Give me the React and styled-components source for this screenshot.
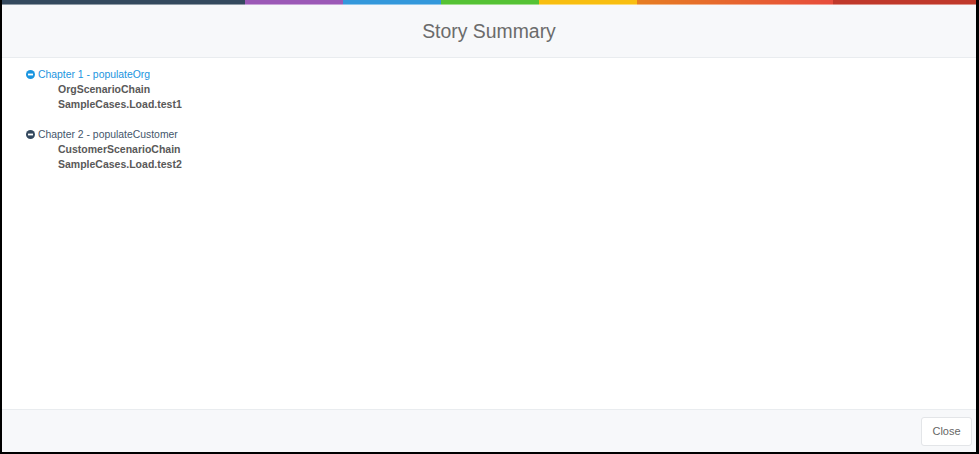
import styled, { createGlobalStyle } from "styled-components";

const GlobalStyle = createGlobalStyle`
    html, body {
        margin: 0;
        padding: 0;
        background: #000;
    }
    body {
        font-family: "Liberation Sans", Arial, sans-serif;
    }
`

const Frame = styled.div`
    height: 452px;
    margin: 0 3px 0 2px;
    background-color: #fff;
    display: flex;
    flex-direction: column;
`

const ColorBar = styled.div`
    display: flex;
    height: 5px;
`

const Segment = styled.div`
    flex: ${(p) => p.$grow} 0 0;
    background: ${(p) => p.$color};
    border-bottom: 1px solid rgba(255, 255, 255, 0.45);
`

const Header = styled.div`
    height: 52px;
    background-color: #f7f8fa;
    border-bottom: 1px solid #e9ecef;
    display: flex;
    align-items: center;
    justify-content: center;
`

const Title = styled.div`
    font-size: 19.4px;
    color: #6b6b6b;
`

const Body = styled.div`
    flex: 1;
    padding: 9px 24px;
`

const Chapter = styled.div`
    margin-bottom: 15px;
`

const ChapterTitle = styled.div`
    display: flex;
    align-items: center;
    gap: 3px;
    height: 15px;
    font-size: 10.4px;
    color: ${(p) => p.$color};
`

const Step = styled.div`
    height: 15px;
    line-height: 15px;
    padding-left: 32px;
    font-size: 10.5px;
    font-weight: bold;
    color: #595959;
`

const Footer = styled.div`
    height: 42px;
    background-color: #f7f8fa;
    border-top: 1px solid #e9ecef;
    display: flex;
    align-items: center;
    justify-content: flex-end;
    padding-right: 4px;
`

const Button = styled.button`
    height: 29px;
    width: 51px;
    background-color: #fff;
    border: 1px solid #e3e5e8;
    border-radius: 3px;
    font-family: "Liberation Sans", Arial, sans-serif;
    font-size: 11px;
    color: #666;
    cursor: pointer;
`

const MinusCircle = ({ color }) => (
  <svg width="9" height="9" viewBox="0 0 10 10">
    <circle cx="5" cy="5" r="5" fill={color} />
    <rect x="2.2" y="4" width="5.6" height="2" fill="#fff" />
  </svg>
)

const bar = [
  { grow: 243, color: "#34495e" },
  { grow: 98, color: "#9b59b6" },
  { grow: 98, color: "#3498db" },
  { grow: 98, color: "#55c234" },
  { grow: 98, color: "#f8be10" },
  { grow: 196, color: "linear-gradient(to right, #e67e22, #e74c3c)" },
  { grow: 143, color: "#c0392b" },
]

const chapters = [
  {
    title: "Chapter 1 - populateOrg",
    color: "#1b95e0",
    icon: "#1b95e0",
    steps: ["OrgScenarioChain", "SampleCases.Load.test1"],
  },
  {
    title: "Chapter 2 - populateCustomer",
    color: "#44566b",
    icon: "#34495e",
    steps: ["CustomerScenarioChain", "SampleCases.Load.test2"],
  },
]

const App = () => {
  return (
    <>
      <GlobalStyle />
      <Frame>
        <ColorBar>
          {bar.map((s, i) => (
            <Segment key={i} $grow={s.grow} $color={s.color} />
          ))}
        </ColorBar>
        <Header>
          <Title>Story Summary</Title>
        </Header>
        <Body>
          {chapters.map((c) => (
            <Chapter key={c.title}>
              <ChapterTitle $color={c.color}>
                <MinusCircle color={c.icon} />
                {c.title}
              </ChapterTitle>
              {c.steps.map((s) => (
                <Step key={s}>{s}</Step>
              ))}
            </Chapter>
          ))}
        </Body>
        <Footer>
          <Button>Close</Button>
        </Footer>
      </Frame>
    </>
  )
}

export default App
